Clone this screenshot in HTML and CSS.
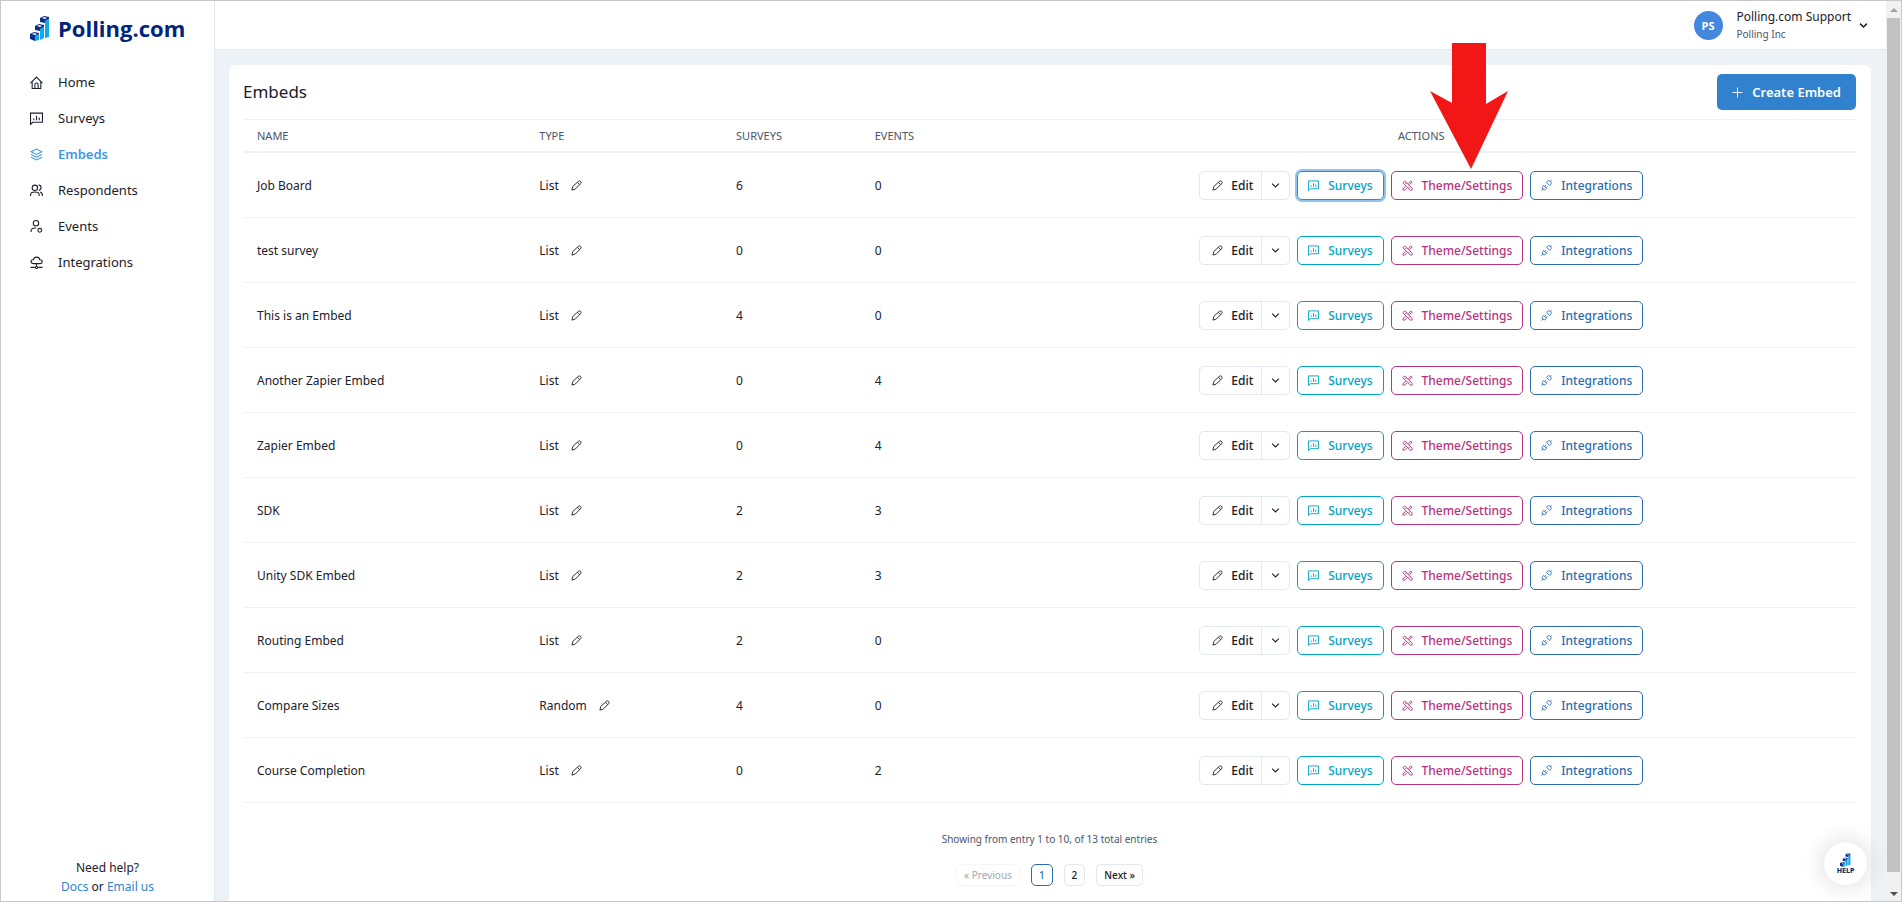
FILE: index.html
```
<!DOCTYPE html>
<html lang="en">
<head>
<meta charset="utf-8">
<title>Embeds - Polling.com</title>
<link rel="stylesheet" href="styles.css">
</head>
<body>
<svg class="sprite" aria-hidden="true">
  <symbol id="pencil" viewBox="0 0 24 24"><path d="M2 22l2-8L16 3q3-2 5 0t0 5L9 20zM14 5l5 5"/></symbol>
  <symbol id="down" viewBox="0 0 24 24"><path d="M3 7l9 9 9-9"/></symbol>
  <symbol id="chat" viewBox="0 0 24 24"><path d="M1 23V2h22v17H5zM7 15v-3M12 15V7M17 15v-5"/></symbol>
  <symbol id="tools" viewBox="0 0 24 24"><path d="M2 6l4-4 16 16v4h-4zM14 8l5-6 3 3-6 5M8 14l-6 5v3h4l5-5M10 6L7 9M18 14l-3 3"/></symbol>
  <symbol id="plug" viewBox="0 0 24 24"><path d="M1 23l4-4M6 12l6 6c-2 4-6 4-8 2s-2-5 2-8zM8 14l3-3M11 17l3-3M12 5l7 7c4-3 4-6 2-9-3-2-6-2-9 2zM20 4l3-3"/></symbol>
  <symbol id="home" viewBox="0 0 24 24"><path d="M1 13L12 2l11 11M4 10v13h16V10M9 23v-7a3 3 0 0 1 6 0v7"/></symbol>
  <symbol id="layers" viewBox="0 0 24 24"><path d="M2 7l10-5 10 5-10 5zM2 12l10 5 10-5M2 17l10 5 10-5"/></symbol>
  <symbol id="people" viewBox="0 0 24 24"><circle cx="9" cy="7" r="5"/><path d="M1 22v-2c0-7 16-7 16 0v2M16 2c6 0 6 9 0 10M19 15c3 1 4 3 4 7"/></symbol>
  <symbol id="person" viewBox="0 0 24 24"><circle cx="11" cy="6" r="5"/><path d="M2 22v-2c0-4 4-6 9-5"/><circle cx="18" cy="19" r="3.500"/></symbol>
  <symbol id="cloud" viewBox="0 0 24 24"><path d="M7 14c-7 0-6-7-1-7 2-7 11-6 12 0 6 0 6 7 0 7zM12 14v5M1 21h8M15 21h8"/><circle cx="12" cy="21" r="2"/></symbol>
  <symbol id="plus" viewBox="0 0 24 24"><path d="M12 1v22M1 12h22"/></symbol>
  <symbol id="bars" viewBox="0 0 20 25">
    <path fill="#12a8f0" d="M5 20l4-2v6l-4 1zM10 13l4-2v11l-4 2zM15 5l4-2v18l-4 1z"/>
    <path fill="#0a2f8a" d="M0 18l4-2 5 1v1l-4 2v5l-5-2zM5 10l4-2 5 1v2l-4 2v2l-5-1zM10 2l4-2 5 1v2l-4 2v2l-5-1z"/>
    <path fill="#fff" d="M2 18l2-1 3 1-2 1zM7 10l2-1 3 1-2 1zM12 2l2-1 3 1-2 1z"/>
  </symbol>
</svg>
<div class="app">
  <aside class="sidebar">
    <a class="logo" href="#"><svg class="logo-mark"><use href="#bars"/></svg>Polling.com</a>
    <nav class="nav">
      <a href="#"><svg class="icon"><use href="#home"/></svg>Home</a>
      <a href="#"><svg class="icon"><use href="#chat"/></svg>Surveys</a>
      <a class="active" href="#"><svg class="icon"><use href="#layers"/></svg>Embeds</a>
      <a href="#"><svg class="icon"><use href="#people"/></svg>Respondents</a>
      <a href="#"><svg class="icon"><use href="#person"/></svg>Events</a>
      <a href="#"><svg class="icon"><use href="#cloud"/></svg>Integrations</a>
    </nav>
    <div class="need-help">Need help?<br><a href="#">Docs</a> or <a href="#">Email us</a></div>
  </aside>
  <div class="page">
    <header class="topbar">
      <button class="account" type="button">
        <span class="avatar">PS</span>
        <span class="who"><span class="who-name">Polling.com Support</span><span class="who-org">Polling Inc</span></span>
        <svg class="icon chevron"><use href="#down"/></svg>
      </button>
    </header>
    <main class="content">
      <section class="card">
        <div class="card-head">
          <h1>Embeds</h1>
          <button class="create" type="button"><svg class="icon small"><use href="#plus"/></svg>Create Embed</button>
        </div>
        <table>
          <thead><tr><th class="c-name">Name</th><th class="c-type">Type</th><th class="c-surveys">Surveys</th><th class="c-events">Events</th><th class="c-actions">Actions</th></tr></thead>
          <tbody>
            <tr><td>Job Board</td><td>List<button class="pen" type="button" aria-label="Edit type"><svg class="icon small"><use href="#pencil"/></svg></button></td><td>6</td><td>0</td>
              <td><div class="actions"><span class="split"><button type="button"><svg class="icon small"><use href="#pencil"/></svg>Edit</button><button class="more" type="button" aria-label="More"><svg class="icon tiny"><use href="#down"/></svg></button></span><button class="btn teal focused" type="button"><svg class="icon small"><use href="#chat"/></svg>Surveys</button><button class="btn pink" type="button"><svg class="icon small"><use href="#tools"/></svg>Theme/Settings</button><button class="btn blue" type="button"><svg class="icon small"><use href="#plug"/></svg>Integrations</button></div></td></tr>
            <tr><td>test survey</td><td>List<button class="pen" type="button" aria-label="Edit type"><svg class="icon small"><use href="#pencil"/></svg></button></td><td>0</td><td>0</td>
              <td><div class="actions"><span class="split"><button type="button"><svg class="icon small"><use href="#pencil"/></svg>Edit</button><button class="more" type="button" aria-label="More"><svg class="icon tiny"><use href="#down"/></svg></button></span><button class="btn teal" type="button"><svg class="icon small"><use href="#chat"/></svg>Surveys</button><button class="btn pink" type="button"><svg class="icon small"><use href="#tools"/></svg>Theme/Settings</button><button class="btn blue" type="button"><svg class="icon small"><use href="#plug"/></svg>Integrations</button></div></td></tr>
            <tr><td>This is an Embed</td><td>List<button class="pen" type="button" aria-label="Edit type"><svg class="icon small"><use href="#pencil"/></svg></button></td><td>4</td><td>0</td>
              <td><div class="actions"><span class="split"><button type="button"><svg class="icon small"><use href="#pencil"/></svg>Edit</button><button class="more" type="button" aria-label="More"><svg class="icon tiny"><use href="#down"/></svg></button></span><button class="btn teal" type="button"><svg class="icon small"><use href="#chat"/></svg>Surveys</button><button class="btn pink" type="button"><svg class="icon small"><use href="#tools"/></svg>Theme/Settings</button><button class="btn blue" type="button"><svg class="icon small"><use href="#plug"/></svg>Integrations</button></div></td></tr>
            <tr><td>Another Zapier Embed</td><td>List<button class="pen" type="button" aria-label="Edit type"><svg class="icon small"><use href="#pencil"/></svg></button></td><td>0</td><td>4</td>
              <td><div class="actions"><span class="split"><button type="button"><svg class="icon small"><use href="#pencil"/></svg>Edit</button><button class="more" type="button" aria-label="More"><svg class="icon tiny"><use href="#down"/></svg></button></span><button class="btn teal" type="button"><svg class="icon small"><use href="#chat"/></svg>Surveys</button><button class="btn pink" type="button"><svg class="icon small"><use href="#tools"/></svg>Theme/Settings</button><button class="btn blue" type="button"><svg class="icon small"><use href="#plug"/></svg>Integrations</button></div></td></tr>
            <tr><td>Zapier Embed</td><td>List<button class="pen" type="button" aria-label="Edit type"><svg class="icon small"><use href="#pencil"/></svg></button></td><td>0</td><td>4</td>
              <td><div class="actions"><span class="split"><button type="button"><svg class="icon small"><use href="#pencil"/></svg>Edit</button><button class="more" type="button" aria-label="More"><svg class="icon tiny"><use href="#down"/></svg></button></span><button class="btn teal" type="button"><svg class="icon small"><use href="#chat"/></svg>Surveys</button><button class="btn pink" type="button"><svg class="icon small"><use href="#tools"/></svg>Theme/Settings</button><button class="btn blue" type="button"><svg class="icon small"><use href="#plug"/></svg>Integrations</button></div></td></tr>
            <tr><td>SDK</td><td>List<button class="pen" type="button" aria-label="Edit type"><svg class="icon small"><use href="#pencil"/></svg></button></td><td>2</td><td>3</td>
              <td><div class="actions"><span class="split"><button type="button"><svg class="icon small"><use href="#pencil"/></svg>Edit</button><button class="more" type="button" aria-label="More"><svg class="icon tiny"><use href="#down"/></svg></button></span><button class="btn teal" type="button"><svg class="icon small"><use href="#chat"/></svg>Surveys</button><button class="btn pink" type="button"><svg class="icon small"><use href="#tools"/></svg>Theme/Settings</button><button class="btn blue" type="button"><svg class="icon small"><use href="#plug"/></svg>Integrations</button></div></td></tr>
            <tr><td>Unity SDK Embed</td><td>List<button class="pen" type="button" aria-label="Edit type"><svg class="icon small"><use href="#pencil"/></svg></button></td><td>2</td><td>3</td>
              <td><div class="actions"><span class="split"><button type="button"><svg class="icon small"><use href="#pencil"/></svg>Edit</button><button class="more" type="button" aria-label="More"><svg class="icon tiny"><use href="#down"/></svg></button></span><button class="btn teal" type="button"><svg class="icon small"><use href="#chat"/></svg>Surveys</button><button class="btn pink" type="button"><svg class="icon small"><use href="#tools"/></svg>Theme/Settings</button><button class="btn blue" type="button"><svg class="icon small"><use href="#plug"/></svg>Integrations</button></div></td></tr>
            <tr><td>Routing Embed</td><td>List<button class="pen" type="button" aria-label="Edit type"><svg class="icon small"><use href="#pencil"/></svg></button></td><td>2</td><td>0</td>
              <td><div class="actions"><span class="split"><button type="button"><svg class="icon small"><use href="#pencil"/></svg>Edit</button><button class="more" type="button" aria-label="More"><svg class="icon tiny"><use href="#down"/></svg></button></span><button class="btn teal" type="button"><svg class="icon small"><use href="#chat"/></svg>Surveys</button><button class="btn pink" type="button"><svg class="icon small"><use href="#tools"/></svg>Theme/Settings</button><button class="btn blue" type="button"><svg class="icon small"><use href="#plug"/></svg>Integrations</button></div></td></tr>
            <tr><td>Compare Sizes</td><td>Random<button class="pen" type="button" aria-label="Edit type"><svg class="icon small"><use href="#pencil"/></svg></button></td><td>4</td><td>0</td>
              <td><div class="actions"><span class="split"><button type="button"><svg class="icon small"><use href="#pencil"/></svg>Edit</button><button class="more" type="button" aria-label="More"><svg class="icon tiny"><use href="#down"/></svg></button></span><button class="btn teal" type="button"><svg class="icon small"><use href="#chat"/></svg>Surveys</button><button class="btn pink" type="button"><svg class="icon small"><use href="#tools"/></svg>Theme/Settings</button><button class="btn blue" type="button"><svg class="icon small"><use href="#plug"/></svg>Integrations</button></div></td></tr>
            <tr><td>Course Completion</td><td>List<button class="pen" type="button" aria-label="Edit type"><svg class="icon small"><use href="#pencil"/></svg></button></td><td>0</td><td>2</td>
              <td><div class="actions"><span class="split"><button type="button"><svg class="icon small"><use href="#pencil"/></svg>Edit</button><button class="more" type="button" aria-label="More"><svg class="icon tiny"><use href="#down"/></svg></button></span><button class="btn teal" type="button"><svg class="icon small"><use href="#chat"/></svg>Surveys</button><button class="btn pink" type="button"><svg class="icon small"><use href="#tools"/></svg>Theme/Settings</button><button class="btn blue" type="button"><svg class="icon small"><use href="#plug"/></svg>Integrations</button></div></td></tr>
          </tbody>
        </table>
        <p class="summary">Showing from entry 1 to 10, of 13 total entries</p>
        <div class="pager">
          <button type="button" disabled>« Previous</button>
          <button class="current" type="button">1</button>
          <button type="button">2</button>
          <button class="next" type="button">Next »</button>
        </div>
      </section>
    </main>
  </div>
  <div class="scrollbar" aria-hidden="true">
    <svg class="scroll-arrow up" viewBox="0 0 8 4"><path d="M0 4l4-4 4 4z"/></svg>
    <div class="thumb"></div>
    <svg class="scroll-arrow" viewBox="0 0 8 4"><path d="M0 0l4 4 4-4z"/></svg>
  </div>
  <button class="help" type="button"><svg class="help-mark"><use href="#bars"/></svg>HELP</button>
  <svg class="pointer" viewBox="0 0 78 126" aria-hidden="true"><path d="M22 0h34v61l22-13-37 78L0 48l22 12z"/></svg>
</div>
</body>
</html>
```
FILE: styles.css
```
* { box-sizing: border-box; }
body { margin: 0; font-family: "Noto Sans", "Open Sans", sans-serif; font-size: 12px; color: #1a202c; background: #fff; }
button { font: inherit; color: inherit; background: none; border: 0; padding: 0; cursor: pointer; }
a { color: #3182ce; text-decoration: none; }
.sprite { position: absolute; width: 0; height: 0; }
.icon { width: 13px; height: 13px; flex: none; fill: none; stroke: currentColor; stroke-width: 2; }
.icon.small { width: 11px; height: 11px; }
.icon.tiny { width: 9px; height: 9px; stroke-width: 3; }
.icon.chevron { width: 9px; height: 9px; stroke-width: 4; }

.app { position: relative; display: flex; height: 100vh; overflow: hidden; border: 1px solid #c8c8c8; }
.sidebar { width: 214px; flex: none; display: flex; flex-direction: column; border-right: 1px solid #e2e8f0; }
.logo { display: flex; align-items: center; gap: 8px; height: 54px; padding-left: 29px; color: #00237c; font: 700 22px "Open Sans", sans-serif; }
.logo-mark { width: 20px; height: 25px; }
.nav { display: flex; flex-direction: column; padding-top: 9px; }
.nav a { display: flex; align-items: center; gap: 15px; height: 36px; padding-left: 29px; font-size: 13px; color: #1a202c; }
.nav .active { color: #4299e1; font-weight: 600; }
.need-help { margin-top: auto; padding-bottom: 5px; text-align: center; line-height: 19px; }

.page { flex: 1; min-width: 0; display: flex; flex-direction: column; background: #edf2f7; }
.topbar { height: 49px; flex: none; display: flex; justify-content: flex-end; align-items: center; padding-right: 18px; background: #fff; border-bottom: 1px solid #e2e8f0; }
.account { display: flex; align-items: center; text-align: left; }
.avatar { width: 29px; height: 29px; margin-right: 14px; border-radius: 50%; background: #4388dd; color: #fff; font-size: 11px; font-weight: 700; line-height: 29px; text-align: center; }
.who { display: flex; flex-direction: column; margin-right: 8px; }
.who-name { line-height: 18px; }
.who-org { font-size: 10px; line-height: 17px; color: #4a5568; }

.content { flex: 1; display: flex; min-height: 0; padding: 15px 15px 0 14px; }
.card { flex: 1; padding: 0 15px 0 14px; background: #fff; border-radius: 6px 6px 0 0; }
.card-head { display: flex; align-items: center; justify-content: space-between; height: 54px; }
h1 { margin: 0; font-size: 17px; line-height: 20px; font-weight: 400; }
.create { display: flex; align-items: center; gap: 9px; height: 36px; padding: 0 15px; border-radius: 5px; background: #3182ce; color: #fff; font-size: 13px; font-weight: 600; }

table { width: 100%; table-layout: fixed; border-spacing: 0; border-top: 1px solid #edf2f7; }
th, td { padding: 0 14px; text-align: left; }
th { height: 33px; border-bottom: 2px solid #edf2f7; color: #4a5568; font-size: 11px; font-weight: 400; text-transform: uppercase; }
td { height: 65px; border-bottom: 1px solid #edf2f7; }
.c-name { width: 17.5%; }
.c-type { width: 12.2%; }
.c-surveys { width: 8.6%; }
.c-events { width: 7.8%; }
th.c-actions { text-align: center; }
.pen { margin-left: 12px; vertical-align: -1px; }
.pen .icon { display: block; }

.actions { display: flex; justify-content: center; gap: 7px; font-weight: 500; }
.split { display: flex; height: 29px; border: 1px solid #e2e8f0; border-radius: 5px; }
.split button { display: flex; align-items: center; gap: 8px; padding: 0 8px 0 12px; }
.split .more { padding: 0 9px; border-left: 1px solid #e2e8f0; }
.btn { display: flex; align-items: center; gap: 9px; height: 29px; padding: 0 10px; border: 1px solid; border-radius: 5px; }
.teal { color: #00a3c4; }
.pink { color: #b83280; }
.blue { color: #2b6cb0; }
.focused { box-shadow: 0 0 0 2px #90c3ee; }

.summary { margin: 27px 0 16px; color: #4a5568; font-size: 10px; line-height: 18px; text-align: center; }
.pager { display: flex; justify-content: center; gap: 11px; font-size: 10px; font-weight: 500; }
.pager button { height: 22px; padding: 0 7px; border: 1px solid #e2e8f0; border-radius: 5px; }
.pager button:disabled { color: #a3a6ab; font-weight: 400; border-color: #f3f6f9; }
.pager .current { color: #2b6cb0; border-color: #2b6cb0; }

.scrollbar { width: 15px; flex: none; display: flex; flex-direction: column; align-items: center; padding: 7px 1px 5px; gap: 6px; background: #f1f1f1; }
.thumb { flex: 1; width: 100%; margin-bottom: 14px; background: #c1c1c1; }
.scroll-arrow { width: 8px; height: 4px; fill: #505050; }
.scroll-arrow.up { fill: #a3a3a3; }

.help { position: absolute; right: 34px; bottom: 16px; width: 43px; height: 43px; display: flex; flex-direction: column; align-items: center; justify-content: center; border-radius: 50%; background: #fff; box-shadow: 0 0 24px rgba(0, 0, 0, 0.16); color: #0a2f6a; font-size: 7px; font-weight: 800; line-height: 8px; }
.help-mark { width: 11px; height: 14px; }
.pointer { position: absolute; top: 42px; right: 393px; width: 78px; height: 126px; fill: #f21616; }
```
